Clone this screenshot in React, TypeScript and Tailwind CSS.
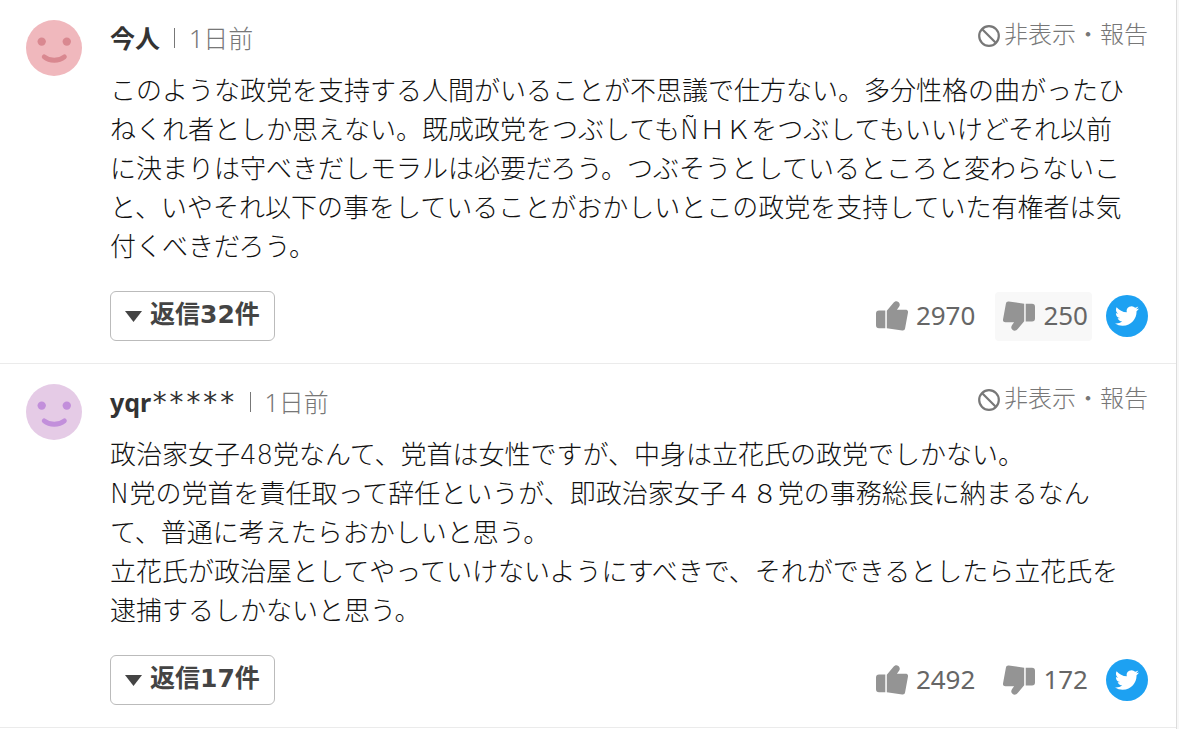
import { useState } from 'react';

type Comment = {
  id: string;
  author: string;
  mask?: string;
  time: string;
  paragraphs: string[];
  replies: number;
  likes: number;
  dislikes: number;
  tone: 'pink' | 'purple';
  highlighted?: boolean;
};

const comments: Comment[] = [
  {
    id: 'c1',
    author: '今人',
    time: '1日前',
    paragraphs: [
      'このような政党を支持する人間がいることが不思議で仕方ない。多分性格の曲がったひねくれ者としか思えない。既成政党をつぶしてもÑＨＫをつぶしてもいいけどそれ以前に決まりは守べきだしモラルは必要だろう。つぶそうとしているところと変わらないこと、いやそれ以下の事をしていることがおかしいとこの政党を支持していた有権者は気付くべきだろう。',
    ],
    replies: 32,
    likes: 2970,
    dislikes: 250,
    tone: 'pink',
    highlighted: true,
  },
  {
    id: 'c2',
    author: 'yqr',
    mask: '*****',
    time: '1日前',
    paragraphs: [
      '政治家女子48党なんて、党首は女性ですが、中身は立花氏の政党でしかない。',
      'N党の党首を責任取って辞任というが、即政治家女子４８党の事務総長に納まるなんて、普通に考えたらおかしいと思う。',
      '立花氏が政治屋としてやっていけないようにすべきで、それができるとしたら立花氏を逮捕するしかないと思う。',
    ],
    replies: 17,
    likes: 2492,
    dislikes: 172,
    tone: 'purple',
  },
];

const tones = {
  pink: { face: 'text-[#f0b8bd]', detail: 'text-[#d98890]' },
  purple: { face: 'text-[#e5cbe6]', detail: 'text-[#c28fdb]' },
};

function Avatar({ tone }: { tone: Comment['tone'] }) {
  return (
    <svg viewBox="0 0 56 56" className="size-14 shrink-0" aria-hidden="true">
      <circle cx="28" cy="28" r="28" fill="currentColor" className={tones[tone].face} />
      <g className={tones[tone].detail}>
        <circle cx="15.7" cy="21.6" r="4.2" fill="currentColor" />
        <circle cx="40.8" cy="21.6" r="4.2" fill="currentColor" />
        <path d="M18.200 36.800c5.500 4.600 14.500 4.600 20.200 0" fill="none" stroke="currentColor" strokeWidth="4.800" strokeLinecap="round" />
      </g>
    </svg>
  );
}

function BlockIcon() {
  return (
    <svg viewBox="0 0 22 22" className="mt-1 size-[22px]" fill="none" stroke="currentColor" strokeWidth="2.200" aria-hidden="true">
      <circle cx="11" cy="11" r="9.800" />
      <path d="M4 4l14 14" />
    </svg>
  );
}

function Thumb({ down = false }: { down?: boolean }) {
  return (
    <svg viewBox="0 0 32 30" className={down ? 'h-[30px] w-8 rotate-180 text-[#949494]' : 'h-[30px] w-8 text-[#949494]'} fill="currentColor" aria-hidden="true">
      <path d="M3 9.500h6.300v17.800H3a3 3 0 0 1-3-3v-11.800a3 3 0 0 1 3-3z" />
      <path d="M10.800 9.800L17.300 2c1.400-1.700 3.400-2.200 5-1 1.700 1.300 1.900 3.200.6 5l-2 2.700h8.700c1.800 0 2.700 1.200 2.400 2.900l-2.900 15.600c-.3 1.700-1.300 2.400-2.900 2.200l-15.400-2.100z" />
    </svg>
  );
}

function Bird() {
  return (
    <svg viewBox="0 0 24 24" className="size-6" fill="currentColor" aria-hidden="true">
      <path d="M23.953 4.570a10 10 0 0 1-2.825.775 4.958 4.958 0 0 0 2.163-2.723c-.951.555-2.005.959-3.127 1.184a4.920 4.920 0 0 0-8.384 4.482C7.690 8.095 4.067 6.130 1.640 3.162a4.822 4.822 0 0 0-.666 2.475c0 1.710.870 3.213 2.188 4.096a4.904 4.904 0 0 1-2.228-.616v.060a4.923 4.923 0 0 0 3.946 4.827 4.996 4.996 0 0 1-2.212.085 4.936 4.936 0 0 0 4.604 3.417 9.867 9.867 0 0 1-6.102 2.105c-.390 0-.779-.023-1.170-.067a13.995 13.995 0 0 0 7.557 2.209c9.053 0 13.998-7.496 13.998-13.985 0-.210 0-.420-.015-.630A9.935 9.935 0 0 0 24 4.590z" />
    </svg>
  );
}

function CommentItem({ comment }: { comment: Comment }) {
  const [open, setOpen] = useState(false);
  return (
    <li className="flex gap-7 border-b border-[#ebebeb] pt-5 pr-7 pb-[22px] pl-[26px]">
      <Avatar tone={comment.tone} />
      <article className="min-w-0 flex-1">
        <header className="flex h-[52px] items-start justify-between">
          <div className="flex h-9 items-center gap-[14px] text-[25px] leading-9">
            <h2 className="font-bold">
              {comment.author}
              {comment.mask && (
                <span className="font-['DejaVu_Sans_Mono',monospace] text-[28px] leading-none font-normal">{comment.mask}</span>
              )}
            </h2>
            <span className="h-5 w-px bg-[#777]" />
            <time className="font-light text-[#777]">{comment.time}</time>
          </div>
          <button type="button" className="flex h-7 items-center gap-1 text-2xl font-light text-[#777]">
            <BlockIcon />
            <span>非表示・報告</span>
          </button>
        </header>
        <div className="pr-4 font-['DejaVu_Sans','Noto_Sans_CJK_JP',sans-serif] text-[26px] leading-[39px] font-light text-[#111]">
          {comment.paragraphs.map((p) => (
            <p key={p}>{p}</p>
          ))}
        </div>
        <footer className="mt-6 flex items-center justify-between">
          <button
            type="button"
            aria-expanded={open}
            onClick={() => setOpen(!open)}
            className="flex h-[50px] items-center gap-2 rounded-md border border-[#bbb] px-[14px] font-['DejaVu_Sans','Noto_Sans_CJK_JP',sans-serif] text-[25px] font-bold text-[#444]"
          >
            <svg viewBox="0 0 17 11" className="h-[11px] w-[17px]" fill="currentColor" aria-hidden="true">
              <path d="M0 0h17L8.500 11z" />
            </svg>
            <span className="pb-0.5">返信{comment.replies}件</span>
          </button>
          <div className="flex items-center text-[26px] text-[#666]">
            <button type="button" aria-label={`共感した ${comment.likes}`} className="flex h-[49px] items-center gap-2 px-2">
              <Thumb />
              <span className="pb-0.5">{comment.likes}</span>
            </button>
            <button
              type="button"
              aria-label={`違うと思う ${comment.dislikes}`}
              className={`ml-3 flex h-[49px] items-center gap-2 rounded-sm pr-1 pl-2 ${comment.highlighted ? 'bg-[#f8f8f8]' : ''}`}
            >
              <Thumb down />
              <span className="pb-0.5">{comment.dislikes}</span>
            </button>
            <a href="#tweet" aria-label="ツイート" className="ml-[14px] flex size-[42px] items-center justify-center rounded-full bg-[#1da1f2] text-white">
              <Bird />
            </a>
          </div>
        </footer>
      </article>
    </li>
  );
}

export default function App() {
  return (
    <main className="min-h-screen bg-[#f8f8f8] pr-0.5 font-['Noto_Sans','Noto_Sans_CJK_JP',sans-serif] text-[#333]" lang="ja">
      <ul className="min-h-screen border-r border-[#ddd] bg-white">
        {comments.map((c) => (
          <CommentItem key={c.id} comment={c} />
        ))}
      </ul>
    </main>
  );
}
